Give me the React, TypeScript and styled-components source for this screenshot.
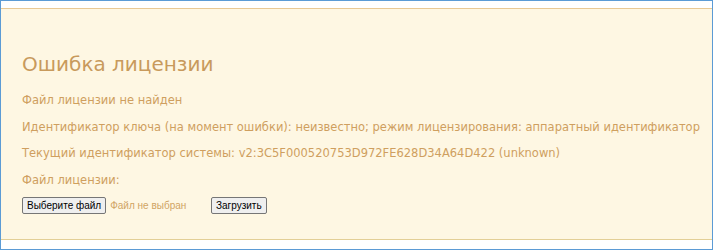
import React from "react";
import styled, { createGlobalStyle } from "styled-components";

const GlobalStyle = createGlobalStyle`
  html, body {
    margin: 0;
    padding: 0;
    background: #ffffff;
  }
  * {
    box-sizing: border-box;
  }
`;

const Frame = styled.div`
  width: 713px;
  height: 250px;
  border: 1px solid #5b9bd5;
  padding-top: 7px;
  background: #ffffff;
`;

const Panel = styled.div`
  height: 232px;
  background: #fef7e3;
  border-top: 1px solid #e9c994;
  border-bottom: 1px solid #e3cf96;
  padding: 43px 8px 0 21px;
  font-family: "DejaVu Sans", Verdana, sans-serif;
  color: #cf9f5f;
`;

const Title = styled.h1`
  margin: 0 0 17px 0;
  font-size: 20px;
  font-weight: normal;
  line-height: 24px;
  color: #c89a5c;
`;

const Line = styled.p`
  margin: 0 0 12px 0;
  font-size: 11.5px;
  line-height: 14.5px;
  white-space: nowrap;
`;

const UploadRow = styled.div`
  display: flex;
  align-items: center;
  margin-top: -2px;
`;

const FilePicker = styled.div`
  display: flex;
  align-items: center;
  gap: 4px;
  width: 189px;
`;

const NativeButton = styled.button`
  height: 17px;
  padding: 0 4px;
  font-family: "Liberation Sans", Arial, sans-serif;
  font-size: 10px;
  color: #000000;
  background: #efefef;
  border: 1px solid #767676;
  border-radius: 2px;
  line-height: 15px;
`;

const FileStatus = styled.span`
  font-family: "Liberation Sans", Arial, sans-serif;
  font-size: 10px;
  color: #d0a464;
`;

export default function App() {
  return (
    <>
      <GlobalStyle />
      <Frame>
        <Panel>
          <Title>Ошибка лицензии</Title>
          <Line>Файл лицензии не найден</Line>
          <Line>
            Идентификатор ключа (на момент ошибки): неизвестно; режим
            лицензирования: аппаратный идентификатор
          </Line>
          <Line>
            Текущий идентификатор системы:
            v2:3C5F000520753D972FE628D34A64D422 (unknown)
          </Line>
          <Line>Файл лицензии:</Line>
          <UploadRow>
            <FilePicker>
              <NativeButton type="button">Выберите файл</NativeButton>
              <FileStatus>Файл не выбран</FileStatus>
            </FilePicker>
            <NativeButton type="button">Загрузить</NativeButton>
          </UploadRow>
        </Panel>
      </Frame>
    </>
  );
}
